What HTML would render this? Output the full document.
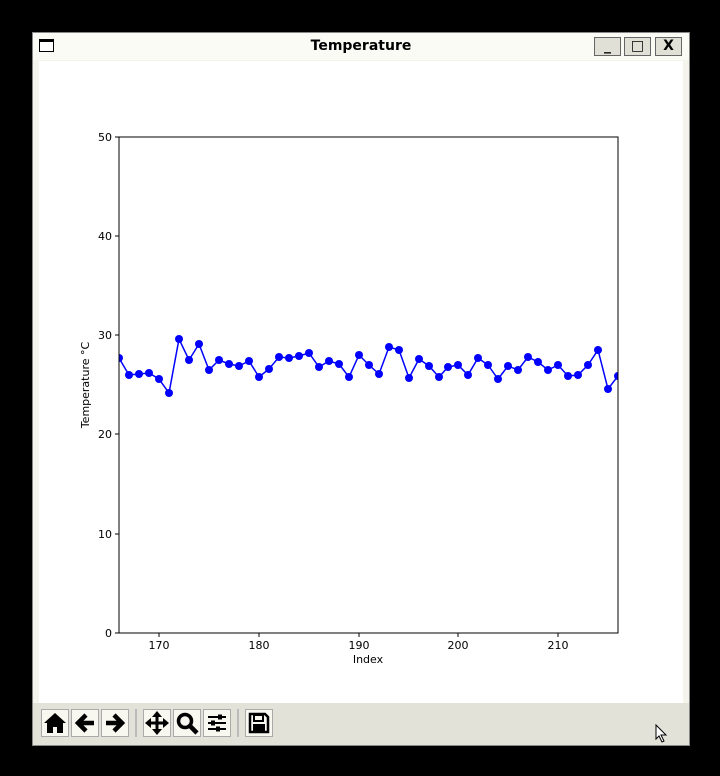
<!DOCTYPE html>
<html><head><style>
html,body{margin:0;padding:0;background:#000;width:720px;height:776px;overflow:hidden;font-family:"Liberation Sans","DejaVu Sans",sans-serif}
.win{position:absolute;left:32px;top:32px;width:656px;height:712px;background:#f4f4ec;border:1px solid #888}
.title{position:absolute;left:0;top:0;width:656px;height:27px;background:#fbfbf6;text-align:center;font:bold 14px "DejaVu Sans",sans-serif;line-height:27px;color:#000}
.ticon{position:absolute;left:6px;top:6px;width:15px;height:13px;border:1px solid #000;border-top:3px solid #000;background:#fff;box-sizing:border-box}
.tb{position:absolute;top:4px;width:27px;height:19px;border:1px solid #666;background:#e0e0d6;box-sizing:border-box;font:bold 14px "DejaVu Sans",sans-serif;line-height:17px;text-align:center}
.content{position:absolute;left:6px;top:28px;width:644px;height:642px;background:#fff}
.tool{position:absolute;left:0;top:670px;width:656px;height:42px;background:#e2e2d8}
.btn{position:absolute;top:6px;width:28px;height:28px;background:#f8f8f0;border:1px solid #aaa;box-sizing:border-box}
.sep{position:absolute;top:6px;width:2px;height:28px;background:#bbb}
</style></head><body>
<div class="win">
 <div class="title"><div class="ticon"></div>Temperature
  <div class="tb" style="left:561px">_</div><div class="tb" style="left:591px">□</div><div class="tb" style="left:622px">X</div>
 </div>
 <div class="content"></div>
 <div class="tool">
  <div class="btn" style="left:8px"><svg width="26" height="26"><path d="M2 13 L13 3 L24 13 L21 13 L21 23 L15 23 L15 17 L11 17 L11 23 L5 23 L5 13Z" fill="#000"/></svg></div>
  <div class="btn" style="left:38px"><svg width="26" height="26"><path d="M22 13 H7 M14 5 L6 13 L14 21" stroke="#000" stroke-width="4.5" fill="none"/></svg></div>
  <div class="btn" style="left:68px"><svg width="26" height="26"><path d="M4 13 H19 M12 5 L20 13 L12 21" stroke="#000" stroke-width="4.5" fill="none"/></svg></div>
  <div class="sep" style="left:102px"></div>
  <div class="btn" style="left:110px"><svg width="26" height="26"><path d="M13 3 V23 M3 13 H23" stroke="#000" stroke-width="3"/><path d="M13 1 L8 7 H18Z M13 25 L8 19 H18Z M1 13 L7 8 V18Z M25 13 L19 8 V18Z" fill="#000"/></svg></div>
  <div class="btn" style="left:140px"><svg width="26" height="26"><circle cx="11" cy="11" r="6.5" stroke="#000" stroke-width="3.5" fill="none"/><path d="M16 16 L23 23" stroke="#000" stroke-width="4.5"/></svg></div>
  <div class="btn" style="left:170px"><svg width="26" height="26"><path d="M4 7 H22 M4 13 H22 M4 19 H22" stroke="#000" stroke-width="2"/><rect x="14" y="4.5" width="4" height="5" fill="#000"/><rect x="7" y="10.5" width="4" height="5" fill="#000"/><rect x="12" y="16.5" width="4" height="5" fill="#000"/></svg></div>
  <div class="sep" style="left:204px"></div>
  <div class="btn" style="left:212px"><svg width="26" height="26"><path d="M4 4 H19 L22 7 V22 H4Z" fill="none" stroke="#000" stroke-width="2.5"/><rect x="8" y="5" width="9" height="6" fill="none" stroke="#000" stroke-width="2"/><rect x="7" y="14" width="12" height="7" fill="#000"/></svg></div>
 </div>
</div>
<svg style="position:absolute;left:0;top:0" width="720" height="776" font-family="DejaVu Sans,Liberation Sans,sans-serif" font-size="11">
<defs><clipPath id="c"><rect x="119" y="137" width="499" height="496"/></clipPath></defs>
<g clip-path="url(#c)">
<polyline fill="none" stroke="#0000ff" stroke-width="1.5" points="119,358 129,375 139,374 149,373 159,379 169,393 179,339 189,360 199,344 209,370 219,360 229,364 239,366 249,361 259,377 269,369 279,357 289,358 299,356 309,353 319,367 329,361 339,364 349,377 359,355 369,365 379,374 389,347 399,350 409,378 419,359 429,366 439,377 448,367 458,365 468,375 478,358 488,365 498,379 508,366 518,370 528,357 538,362 548,370 558,365 568,376 578,375 588,365 598,350 608,389 618,376"/>
<g fill="#0000ff">
<circle cx="119" cy="358" r="4"/><circle cx="129" cy="375" r="4"/><circle cx="139" cy="374" r="4"/><circle cx="149" cy="373" r="4"/><circle cx="159" cy="379" r="4"/><circle cx="169" cy="393" r="4"/><circle cx="179" cy="339" r="4"/><circle cx="189" cy="360" r="4"/><circle cx="199" cy="344" r="4"/><circle cx="209" cy="370" r="4"/><circle cx="219" cy="360" r="4"/><circle cx="229" cy="364" r="4"/><circle cx="239" cy="366" r="4"/><circle cx="249" cy="361" r="4"/><circle cx="259" cy="377" r="4"/><circle cx="269" cy="369" r="4"/><circle cx="279" cy="357" r="4"/><circle cx="289" cy="358" r="4"/><circle cx="299" cy="356" r="4"/><circle cx="309" cy="353" r="4"/><circle cx="319" cy="367" r="4"/><circle cx="329" cy="361" r="4"/><circle cx="339" cy="364" r="4"/><circle cx="349" cy="377" r="4"/><circle cx="359" cy="355" r="4"/><circle cx="369" cy="365" r="4"/><circle cx="379" cy="374" r="4"/><circle cx="389" cy="347" r="4"/><circle cx="399" cy="350" r="4"/><circle cx="409" cy="378" r="4"/><circle cx="419" cy="359" r="4"/><circle cx="429" cy="366" r="4"/><circle cx="439" cy="377" r="4"/><circle cx="448" cy="367" r="4"/><circle cx="458" cy="365" r="4"/><circle cx="468" cy="375" r="4"/><circle cx="478" cy="358" r="4"/><circle cx="488" cy="365" r="4"/><circle cx="498" cy="379" r="4"/><circle cx="508" cy="366" r="4"/><circle cx="518" cy="370" r="4"/><circle cx="528" cy="357" r="4"/><circle cx="538" cy="362" r="4"/><circle cx="548" cy="370" r="4"/><circle cx="558" cy="365" r="4"/><circle cx="568" cy="376" r="4"/><circle cx="578" cy="375" r="4"/><circle cx="588" cy="365" r="4"/><circle cx="598" cy="350" r="4"/><circle cx="608" cy="389" r="4"/><circle cx="618" cy="376" r="4"/>
</g></g>
<rect x="119" y="137" width="499" height="496" fill="none" stroke="#000" stroke-width="1"/>
<g stroke="#000">
<path d="M119 633h-4M119 534h-4M119 434h-4M119 335h-4M119 236h-4M119 137h-4"/>
<path d="M159 633v4M259 633v4M359 633v4M458 633v4M558 633v4"/>
</g>
<g text-anchor="end">
<text x="112" y="637">0</text><text x="112" y="538">10</text><text x="112" y="438">20</text><text x="112" y="339">30</text><text x="112" y="240">40</text><text x="112" y="141">50</text>
</g>
<g text-anchor="middle">
<text x="159" y="649">170</text><text x="259" y="649">180</text><text x="359" y="649">190</text><text x="458" y="649">200</text><text x="558" y="649">210</text>
<text x="368" y="663">Index</text>
<text transform="translate(89,385) rotate(-90)">Temperature °C</text>
</g>
</svg>
<svg style="position:absolute;left:655px;top:724px" width="14" height="20"><path d="M1 1 L1 15 L4 12 L7 18 L9 17 L6 11 L11 11Z" fill="#fff" stroke="#000"/></svg>
</body></html>
